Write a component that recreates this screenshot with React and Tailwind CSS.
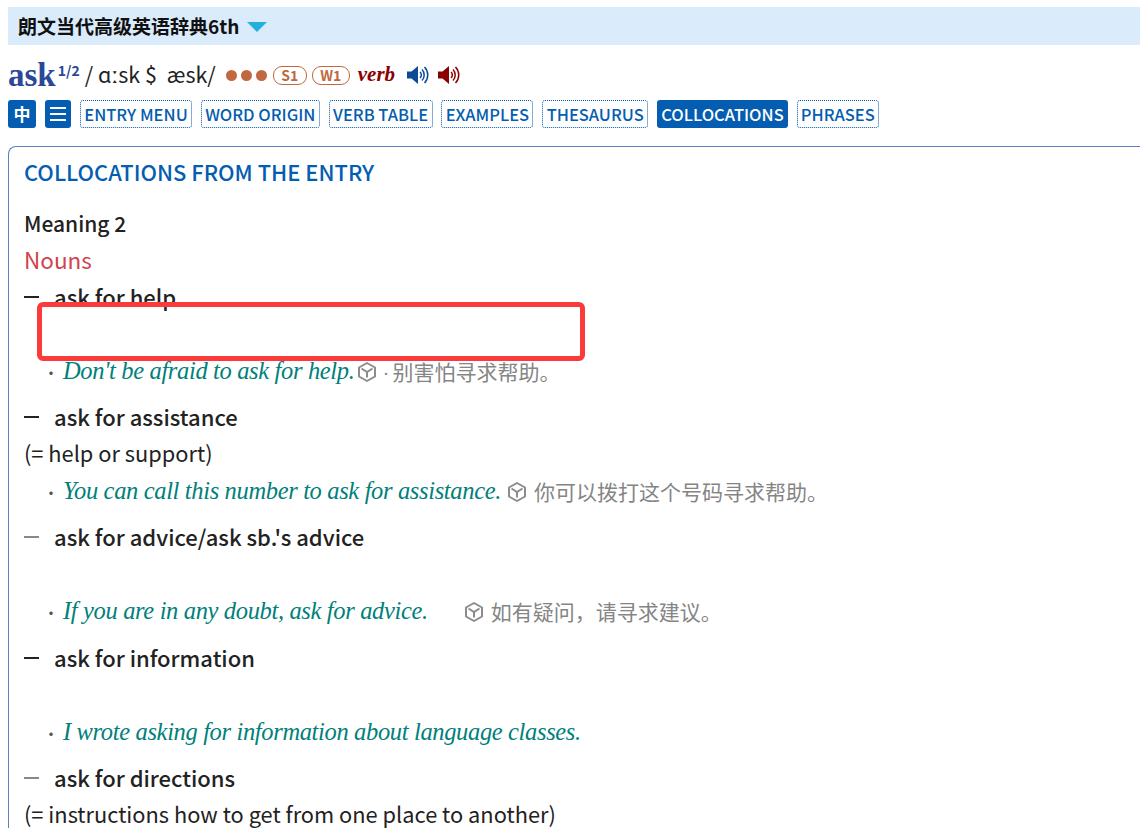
import React from "react";

const sans = "font-['Noto_Sans_CJK_SC','Noto_Sans',sans-serif]";

const tabs = [
  { label: "ENTRY MENU", w: "w-[112px]" },
  { label: "WORD ORIGIN", w: "w-[119px]" },
  { label: "VERB TABLE", w: "w-[104px]" },
  { label: "EXAMPLES", w: "w-[92px]" },
  { label: "THESAURUS", w: "w-[106px]" },
  { label: "COLLOCATIONS", w: "w-[131px]", active: true },
  { label: "PHRASES", w: "w-[82px]" },
];

const Speaker = ({ color }) => (
  <svg width="22" height="22" viewBox="0 0 22 22" fill="none">
    <path d="M0 7.500h4.500L11 2v18l-6.500-5.500H0z" fill={color} />
    <path d="M13 8a4 4 0 0 1 0 6" stroke={color} strokeWidth="1.500" />
    <path d="M15 5.500a8 8 0 0 1 0 11" stroke={color} strokeWidth="1.500" />
    <path d="M17.500 3a11.500 11.500 0 0 1 0 16" stroke={color} strokeWidth="1.500" />
  </svg>
);

const Cube = () => (
  <svg width="20" height="22" viewBox="0 0 20 22" fill="none" stroke="#8c8c8c" strokeWidth="2" className="shrink-0">
    <path d="M10 2l8 4.500v9L10 20l-8-4.500v-9z" strokeLinejoin="round" />
    <path d="M4.500 7.500L10 11l5.500-3.500M10 11v5.500" />
  </svg>
);

const Collo = ({ dash, children }) => (
  <div className="flex h-[37px] items-center text-[22px] font-medium text-[#222]">
    <span className={`mr-[15px] h-[2px] w-[15px] ${dash}`} />
    {children}
  </div>
);

const Example = ({ en, zh, gap = "ml-[6px]", dot }) => (
  <div className="flex h-[37px] items-center pl-[19px] pt-[2px]">
    <span className="mr-[4px] text-[#555]">·</span>
    <span className="font-['Liberation_Serif',serif] text-[24.5px] italic tracking-[-0.35px] text-[#00807a]">{en}</span>
    {zh && (
      <span className={`flex items-center ${gap} text-[21px] text-[#858585]`}>
        <Cube />
        {dot && <span className="ml-[5px] font-['Liberation_Sans',sans-serif]">·</span>}
        <span className={dot ? "ml-[3px]" : "ml-[7px]"}>{zh}</span>
      </span>
    )}
  </div>
);

const Gloss = ({ children }) => (
  <div className="flex h-[37px] items-center text-[21.800px] text-[#222]">{children}</div>
);

export default function App() {
  return (
    <div className={`relative h-[828px] w-[1140px] overflow-hidden bg-white pl-[8px] pt-[7px] ${sans}`}>
      <div className="flex h-[38px] items-center bg-[#daebfc] pl-[10px]">
        <span className="text-[19px] font-bold text-[#111]">朗文当代高级英语辞典6th</span>
        <span className="ml-[8px] mt-[2px] h-0 w-0 border-x-[10px] border-t-[10px] border-x-transparent border-t-[#22b1dc]" />
      </div>

      <div className="mt-[11px] flex h-[38px] items-center">
        <span className="font-['Liberation_Serif',serif] text-[33px] font-bold leading-none text-[#2b4797]">ask</span>
        <span className="mb-[10px] ml-[2px] text-[14px] font-bold leading-none text-[#2b4797]">1/2</span>
        <span className="mb-[2px] ml-[5px] text-[21.500px] text-[#222]">/ ɑːsk $&nbsp; æsk/</span>
        <span className="ml-[10px] flex gap-[4px]">
          <span className="h-[11px] w-[11px] rounded-full bg-[#c06840]" />
          <span className="h-[11px] w-[11px] rounded-full bg-[#c06840]" />
          <span className="h-[11px] w-[11px] rounded-full bg-[#c06840]" />
        </span>
        <span className="ml-[6px] flex h-[19px] w-[34px] items-center justify-center rounded-[9px] border border-[#c06840] text-[14px] font-bold text-[#c06840]">S1</span>
        <span className="ml-[5px] flex h-[19px] w-[38px] items-center justify-center rounded-[9px] border border-[#c06840] text-[14px] font-bold text-[#c06840]">W1</span>
        <span className="ml-[8px] font-['Liberation_Serif',serif] text-[21px] font-bold italic text-[#8b0000]">verb</span>
        <span className="ml-[12px]"><Speaker color="#0c4a96" /></span>
        <span className="ml-[9px]"><Speaker color="#8b0000" /></span>
      </div>

      <div className="mt-[6px] flex h-[28px] items-center">
        <span className="flex h-[28px] w-[28px] items-center justify-center rounded-[3px] bg-[#045db0] text-[17px] font-bold text-white">中</span>
        <span className="ml-[9px] flex h-[28px] w-[26px] flex-col items-center justify-center gap-[4px] rounded-[3px] bg-[#045db0]">
          <span className="h-[2px] w-[16px] bg-white" />
          <span className="h-[2px] w-[16px] bg-white" />
          <span className="h-[2px] w-[16px] bg-white" />
        </span>
        <div className="ml-[9px] flex gap-[8.800px]">
          {tabs.map((t) => (
            <span
              key={t.label}
              className={`flex h-[28px] ${t.w} items-center justify-center whitespace-nowrap rounded-[3px] text-[16.500px] font-medium ${
                t.active ? "bg-[#045db0] text-white" : "border border-dotted border-[#045db0] text-[#045db0]"
              }`}
            >
              {t.label}
            </span>
          ))}
        </div>
      </div>

      <div className="mt-[18px] rounded-tl-[8px] border-l border-t border-[#5b80bd] pl-[15px] pt-[6px]">
        <div className="flex h-[38px] items-center text-[21.900px] font-medium text-[#045db0]">COLLOCATIONS FROM THE ENTRY</div>
        <div className="mt-[14px] flex h-[37px] items-center text-[21px] font-medium text-[#222]">Meaning 2</div>
        <div className="flex h-[36px] items-center text-[22.500px] text-[#d0424c]">Nouns</div>

        <Collo dash="bg-[#222]">ask for help</Collo>
        <div className="h-[37px]" />
        <Example en="Don't be afraid to ask for help." zh="别害怕寻求帮助。" gap="ml-[3px]" dot />

        <div className="mt-[9px]" />
        <Collo dash="bg-[#222]">ask for assistance</Collo>
        <Gloss>(= help or support)</Gloss>
        <Example en="You can call this number to ask for assistance." zh="你可以拨打这个号码寻求帮助。" />

        <div className="mt-[9px]" />
        <Collo dash="bg-[#888]">ask for advice/ask sb.'s advice</Collo>
        <div className="h-[37px]" />
        <Example en="If you are in any doubt, ask for advice." zh="如有疑问，请寻求建议。" gap="ml-[36px]" />

        <div className="mt-[10px]" />
        <Collo dash="bg-[#222]">ask for information</Collo>
        <div className="h-[37px]" />
        <Example en="I wrote asking for information about language classes." />

        <div className="mt-[9px]" />
        <Collo dash="bg-[#888]">ask for directions</Collo>
        <Gloss>(= instructions how to get from one place to another)</Gloss>
      </div>

      {/* red annotation drawn over the screenshot */}
      <div className="absolute left-[37px] top-[302px] h-[59px] w-[548px] rounded-[6px] border-[5px] border-[#fb3a3a]" />
    </div>
  );
}
